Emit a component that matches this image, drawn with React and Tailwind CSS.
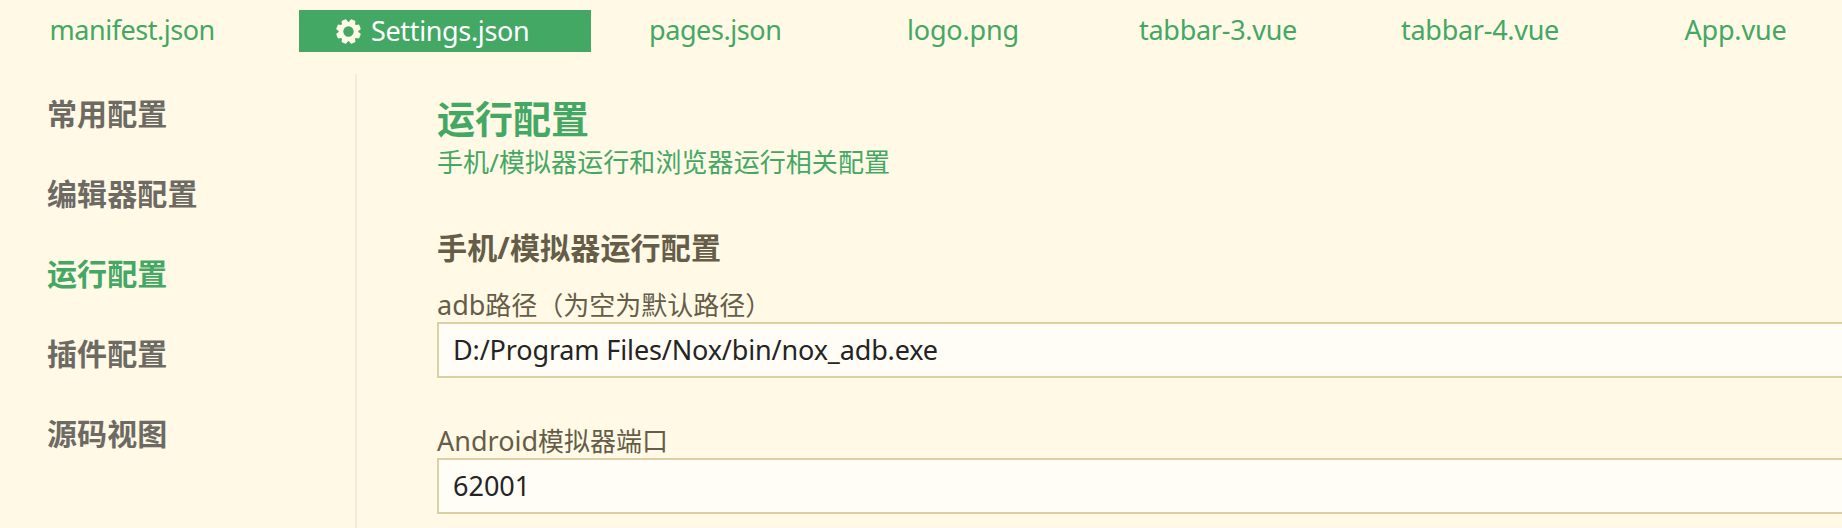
const TABS = [
  { name: 'manifest.json', cell: 'w-[299px] pl-[49.5px] tracking-[-0.47px]' },
  { name: 'Settings.json', cell: 'w-[292px] pl-[37px] tracking-[-0.35px]', active: true },
  { name: 'pages.json', cell: 'w-[258px] pl-[58px] tracking-[-0.42px]' },
  { name: 'logo.png', cell: 'w-[233px] pl-[58px] tracking-[-0.19px]' },
  { name: 'tabbar-3.vue', cell: 'w-[262px] pl-[57px] tracking-[-0.28px]' },
  { name: 'tabbar-4.vue', cell: 'w-[283px] pl-[57px] tracking-[-0.28px]' },
  { name: 'App.vue', cell: 'w-[215px] pl-[57.5px] tracking-[-0.2px]' },
]

const SECTIONS = ['常用配置', '编辑器配置', '运行配置', '插件配置', '源码视图']

function Gear() {
  return (
    <svg viewBox="-12 -12 24 24" className="size-[25px] shrink-0 text-[#fff9e6]" fill="currentColor">
      <circle r="7.2" fill="none" stroke="currentColor" strokeWidth="4.4" />
      {[22.5, 67.5, 112.5, 157.5, 202.5, 247.5, 292.5, 337.5].map((a) => (
        <path key={a} d="M-3.3 -8 L-2.5 -11.3 Q-2.4 -11.9 -1.8 -11.9 H1.8 Q2.4 -11.9 2.5 -11.3 L3.3 -8 Z" transform={`rotate(${a})`} />
      ))}
    </svg>
  )
}

function Tab({ name, cell, active }) {
  return (
    <div
      className={`flex shrink-0 items-center text-[27px] whitespace-nowrap ${cell} ${
        active ? 'h-[42px] gap-[10px] bg-[#43a863] text-white' : 'h-10 text-[#43a863]'
      }`}
    >
      {active && <Gear />}
      <span>{name}</span>
    </div>
  )
}

function Field({ latin, label, value, className, tracking }) {
  return (
    <div className={className}>
      <div className="h-[34px] text-[26px] leading-[34px] text-[#655d48]">
        <span className="text-[27px]">{latin}</span>
        {label}
      </div>
      <div className={`flex h-14 w-[1500px] items-center border-2 border-[#dcd0a4] bg-[#fffdf6] pl-[14px] text-[27px] text-[#242424] ${tracking}`}>
        {value}
      </div>
    </div>
  )
}

export default function App() {
  return (
    <div className="flex h-[528px] w-full flex-col overflow-hidden bg-[#fff9e6] font-['Noto_Sans','Noto_Sans_CJK_SC',sans-serif]">
      <header className="flex h-[74px] shrink-0 items-start pt-[10px]">
        {TABS.map((t) => (
          <Tab key={t.name} {...t} />
        ))}
      </header>
      <div className="flex min-h-0 flex-1">
        <nav className="w-[357px] shrink-0 border-r-2 border-[#f5ecd4] pl-[47px]">
          {SECTIONS.map((s) => (
            <div
              key={s}
              className={`h-20 text-[30px] leading-[79px] font-bold tracking-[0.1px] ${s === '运行配置' ? 'text-[#43a863]' : 'text-[#6d6a64]'}`}
            >
              {s}
            </div>
          ))}
        </nav>
        <main className="min-w-0 flex-1 overflow-hidden pt-5 pl-20">
          <h1 className="text-[38px] leading-[48px] font-bold text-[#43a863]">运行配置</h1>
          <p className="mt-[2px] text-[26px] leading-[36px] tracking-[0.08px] text-[#43a863]">手机/模拟器运行和浏览器运行相关配置</p>
          <h2 className="mt-12 text-[30px] leading-[40px] font-bold tracking-[0.16px] text-[#655d48]">手机/模拟器运行配置</h2>
          <Field className="mt-5" latin="adb" label="路径（为空为默认路径）" value="D:/Program Files/Nox/bin/nox_adb.exe" tracking="tracking-[-0.14px]" />
          <Field className="mt-[46px]" latin="Android" label="模拟器端口" value="62001" tracking="tracking-[0px]" />
        </main>
      </div>
    </div>
  )
}
